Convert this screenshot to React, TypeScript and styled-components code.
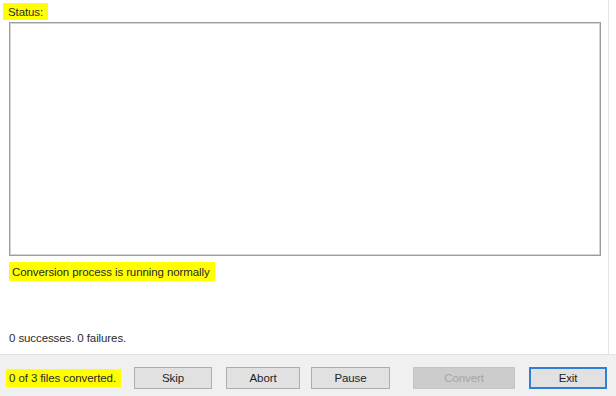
import React from "react";
import styled, { createGlobalStyle } from "styled-components";

const Global = createGlobalStyle`
  html, body { margin: 0; padding: 0; background: #ffffff; }
  body { font-family: "Liberation Sans", Arial, sans-serif; }
`;

const Window = styled.div`
  width: 616px;
  height: 396px;
  display: flex;
  flex-direction: column;
  background: #ffffff;
  overflow: hidden;
`;

const Main = styled.div`
  flex: 1;
  width: 609px;
  border-right: 1px solid #e4e4e4;
  display: flex;
  flex-direction: column;
  padding: 3px 0 0 0;
  box-sizing: border-box;
`;

const Highlight = styled.span`
  display: inline-flex;
  align-items: center;
  background: #ffff00;
  color: #2a2a2a;
  font-size: 11.5px;
  height: 17px;
  padding: 0 5px 0 4px;
  letter-spacing: -0.1px;
  align-self: flex-start;
`;

const StatusLabel = styled(Highlight)`
  margin-left: 3px;
  padding: 0 5px 0 5px;
`;

const ListBox = styled.div`
  margin: 2px 0 0 9px;
  width: 592px;
  height: 234px;
  box-sizing: border-box;
  border: 1px solid #9d9d9d;
  box-shadow: inset 0 0 0 1px #d4d4d4;
  background: #ffffff;
`;

const Message = styled(Highlight)`
  margin: 6px 0 0 9px;
  height: 19px;
  padding: 0 5px 0 3px;
`;

const Counts = styled.div`
  margin: 51px 0 0 9px;
  font-size: 11.5px;
  color: #2a2a2a;
  letter-spacing: -0.1px;
`;

const Bottom = styled.div`
  height: 42px;
  flex: none;
  background: #f0f0f0;
  border-top: 1px solid #e2e2e2;
  display: flex;
  align-items: center;
  box-sizing: border-box;
  padding: 4px 0 0 6px;
`;

const Progress = styled(Highlight)`
  height: 18px;
  padding: 0 5px 0 3px;
  align-self: center;
  margin-right: 13px;
`;

const Button = styled.button<{ $w: number; $gap: number; $primary?: boolean }>`
  width: ${(p) => p.$w}px;
  height: 22px;
  margin-right: ${(p) => p.$gap}px;
  box-sizing: border-box;
  font-family: "Liberation Sans", Arial, sans-serif;
  font-size: 11.5px;
  letter-spacing: -0.1px;
  color: #1e1e1e;
  background: #e1e1e1;
  border: 1px solid ${(p) => (p.$primary ? "#2f7fd4" : "#adadad")};
  box-shadow: ${(p) => (p.$primary ? "inset 0 0 0 1px #2f7fd4" : "none")};
  padding: 0;
  &:disabled {
    color: #a6a6a6;
    background: #cccccc;
    border-color: #c4c4c4;
  }
`;

export default function App() {
  return (
    <>
      <Global />
      <Window>
        <Main>
          <StatusLabel>Status:</StatusLabel>
          <ListBox />
          <Message>Conversion process is running normally</Message>
          <Counts>0 successes. 0 failures.</Counts>
        </Main>
        <Bottom>
          <Progress>0 of 3 files converted.</Progress>
          <Button $w={78} $gap={14}>Skip</Button>
          <Button $w={74} $gap={11}>Abort</Button>
          <Button $w={79} $gap={23}>Pause</Button>
          <Button $w={102} $gap={14} disabled>Convert</Button>
          <Button $w={78} $gap={0} $primary>Exit</Button>
        </Bottom>
      </Window>
    </>
  );
}
